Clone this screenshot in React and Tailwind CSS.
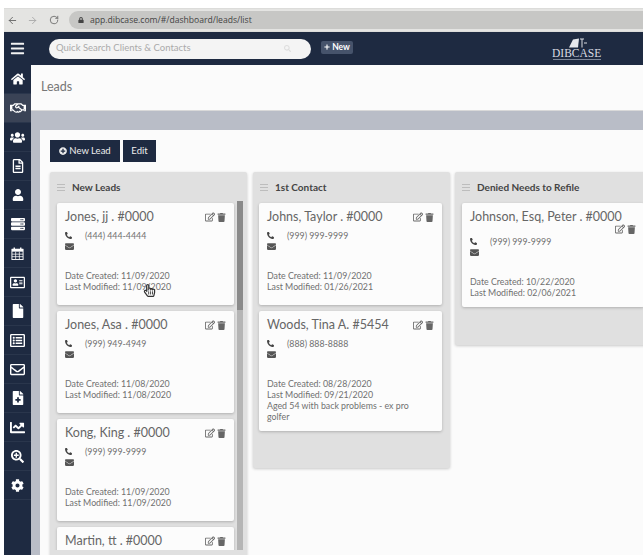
import {
  FaBars,
  FaHome,
  FaRegHandshake,
  FaUsers,
  FaRegFileAlt,
  FaUser,
  FaServer,
  FaRegAddressCard,
  FaFile,
  FaRegListAlt,
  FaRegEnvelope,
  FaEnvelope,
  FaFileMedical,
  FaChartLine,
  FaSearchPlus,
  FaCog,
  FaPlusCircle,
  FaPlus,
  FaPhone,
  FaRegEdit,
  FaTrash,
  FaLock,
  FaSearch,
  FaRegHandPointer,
} from "react-icons/fa";
import { ArrowLeft, ArrowRight, RotateCw } from "lucide-react";

// the old style grid calendar, not in the icon package
const GridCalendar = ({ className }) => (
  <svg viewBox="0 0 14 14" width="13" height="13" className={className} fill="none" stroke="currentColor">
    <rect x="1" y="2.5" width="12" height="11" strokeWidth="1" />
    <rect x="1" y="2" width="12" height="3" fill="currentColor" strokeWidth="0" />
    <path d="M3.5 0.5V3 M10.5 0.5V3" strokeWidth="1.5" />
    <path d="M5 5V13 M9 5V13 M1 7.7H13 M1 10.4H13" strokeWidth="0.8" />
  </svg>
);

const navItems = [
  { Icon: FaHome, size: "text-[14px]" },
  { Icon: FaRegHandshake, size: "text-[16px]", active: true },
  { Icon: FaUsers, size: "text-[15px]" },
  { Icon: FaRegFileAlt, size: "text-[14px]" },
  { Icon: FaUser, size: "text-[12px]" },
  { Icon: FaServer, size: "text-[14px]" },
  { Icon: GridCalendar, size: "" },
  { Icon: FaRegAddressCard, size: "text-[15px]" },
  { Icon: FaFile, size: "text-[14px]" },
  { Icon: FaRegListAlt, size: "text-[15px]" },
  { Icon: FaRegEnvelope, size: "text-[15px]" },
  { Icon: FaFileMedical, size: "text-[14px]" },
  { Icon: FaChartLine, size: "text-[15px]" },
  { Icon: FaSearchPlus, size: "text-[13px]" },
  { Icon: FaCog, size: "text-[13px]" },
];

const Handle = () => (
  <div className="flex w-[8px] flex-col gap-[2px]">
    <div className="h-px bg-[#bdbdbd]" />
    <div className="h-px bg-[#bdbdbd]" />
    <div className="h-px bg-[#bdbdbd]" />
  </div>
);

const LeadCard = ({ name, phone, created, modified, note, wrapIcons }) => (
  <div className={`shrink-0 rounded-[2px] bg-[#fcfcfc] px-[8px] pt-[6px] shadow-[0_1px_3px_rgba(0,0,0,0.22)] ${wrapIcons || note ? "pb-[9px]" : "pb-[13px]"}`}>
    <div className={wrapIcons ? "" : "flex items-start justify-between"}>
      <div className="text-[12.5px] leading-[15px] whitespace-nowrap text-[#666]">{name}</div>
      <div className={`flex h-[10px] items-center gap-[2px] text-[#666] ${wrapIcons ? "justify-end" : "mt-[3px]"}`}>
        <FaRegEdit className="text-[10px]" />
        <FaTrash className="text-[9px]" />
      </div>
    </div>
    <div className={`flex items-center text-[8.8px] leading-[13px] text-[#707070] ${wrapIcons ? "mt-[1px]" : "mt-[5px]"}`}>
      <span className="w-[20px] shrink-0">
        <FaPhone className="-scale-x-100 text-[7px] text-[#444]" />
      </span>
      <span>{phone}</span>
    </div>
    <FaEnvelope className="text-[9px] text-[#555]" />
    <div className="mt-[19px] text-[8.8px] leading-[11px] text-[#707070]">
      <div>Date Created: {created}</div>
      <div>Last Modified: {modified}</div>
      {note && <div className="max-w-[150px]">{note}</div>}
    </div>
  </div>
);

const Column = ({ title, className, children }) => (
  <div className={`shrink-0 rounded-[2px] bg-[#e0e0e0] shadow-[0_1px_3px_rgba(0,0,0,0.2)] ${className}`}>
    <div className="flex h-[31px] items-center gap-[7px] pl-[7px] text-[10px] font-bold text-[#444]">
      <Handle />
      <span>{title}</span>
    </div>
    {children}
  </div>
);

export default function App() {
  return (
    <div className="h-[555px] w-[643px] overflow-hidden bg-white font-['Lato',sans-serif]">
      {/* browser bar */}
      <div className="h-[8px] bg-white" />
      <div className="ml-[4px] flex h-[24px] items-center border-y border-[#dcdcda] bg-[#e4e4e2] text-[#666]">
        <ArrowLeft size={11} className="ml-[3px]" />
        <ArrowRight size={11} className="ml-[9px] text-[#aaa]" />
        <RotateCw size={10} className="ml-[11px]" />
        <div className="ml-[10px] flex h-[18px] flex-1 items-center rounded-l-full bg-[#c7c7c5] pl-[9px] text-[8.6px] text-[#444]">
          <FaLock className="mr-[6px] text-[6px]" />
          <span className="font-['Open_Sans',sans-serif]">app.dibcase.com/#/dashboard/leads/list</span>
        </div>
      </div>

      <div className="flex h-[523px] pl-[4px]">
        {/* sidebar */}
        <div className="flex w-[27px] shrink-0 flex-col bg-[#1e2a41]">
          <div className="flex h-[33px] items-center justify-center text-[#f3f3f3]">
            <FaBars className="text-[15px]" />
          </div>
          {navItems.map(({ Icon, size, active }, index) => (
            <div
              key={index}
              className={`flex h-[29px] items-center justify-center border-b border-[#2a364c] text-white ${active ? "bg-[#3a4356]" : ""}`}
            >
              <Icon className={size} />
            </div>
          ))}
        </div>

        <div className="flex min-w-0 flex-1 flex-col">
          {/* top header */}
          <div className="flex h-[33px] shrink-0 items-center bg-[#1e2a41]">
            <div className="ml-[18px] flex h-[20px] w-[262px] items-center justify-between rounded-full bg-[#f4f4f4] px-[7px] text-[9.5px] text-[#aaa]">
              <span>Quick Search Clients &amp; Contacts</span>
              <FaSearch className="mr-[13px] text-[7px] text-[#ddd]" />
            </div>
            <div className="mb-[3px] ml-[10px] flex h-[13px] w-[32px] items-center justify-center gap-[2px] rounded-[2px] bg-[#46536b] text-[8.5px] font-bold text-white">
              <FaPlus className="text-[6px]" />
              <span>New</span>
            </div>
            <div className="ml-[199px] flex flex-col items-center text-[#d9dce2]">
              <svg width="20" height="10" viewBox="0 0 20 10" className="ml-[2px]">
                <path d="M1 9.5 L5 1.5 L11 .5 L10 9.5 Z" fill="#e6e8ec" />
                <path d="M12 1 H16 M14 1 V9.5 M16 5 H19" stroke="#d9dce2" strokeWidth="1" fill="none" />
              </svg>
              <span className="font-['Liberation_Serif',serif] text-[11.5px] leading-[10px]">DIBCASE</span>
              <div className="mt-[1px] h-px w-[48px] bg-[#7d8698]" />
            </div>
          </div>

          {/* page title */}
          <div className="flex h-[46px] shrink-0 items-center border-b border-[#d9d9d9] bg-[#fbfbfb] pl-[10px] text-[12.5px] text-[#777]">
            Leads
          </div>

          {/* grey band + panel */}
          <div className="min-h-0 flex-1 bg-[#b9bdc7] pt-[19px] pl-[9px]">
            <div className="h-full overflow-hidden bg-[#fbfbfb] pt-[10px] pl-[10px]">
              <div className="flex gap-[3px]">
                <button className="flex h-[22px] w-[70px] items-center justify-center gap-[2px] bg-[#1e2a41] text-[9.5px] text-[#eee]">
                  <FaPlusCircle className="text-[8px]" />
                  New Lead
                </button>
                <button className="h-[22px] w-[33px] bg-[#1e2a41] text-[9.5px] text-[#eee]">Edit</button>
              </div>

              <div className="mt-[10px] flex items-start gap-[5px]">
                <Column title="New Leads" className="h-[390px] w-[197px]">
                  <div className="relative -mt-[2px] h-[349px] overflow-hidden pt-[2px] pl-[7px]">
                    <div className="flex w-[177px] flex-col gap-[6px]">
                      <LeadCard name="Jones, jj . #0000" phone="(444) 444-4444" created="11/09/2020" modified="11/09/2020" />
                      <LeadCard name="Jones, Asa . #0000" phone="(999) 949-4949" created="11/08/2020" modified="11/08/2020" />
                      <LeadCard name="Kong, King . #0000" phone="(999) 999-9999" created="11/09/2020" modified="11/09/2020" />
                      <LeadCard name="Martin, tt . #0000" phone="(999) 999-9999" created="11/09/2020" modified="11/09/2020" />
                    </div>
                    {/* scrollbar */}
                    <div className="absolute top-0 left-[187px] h-full w-[6px] bg-[#b5b5b5]">
                      <div className="h-[109px] bg-[#8a8a8a]" />
                    </div>
                    <FaRegHandPointer className="absolute top-[83px] left-[93px] text-[13px] text-[#333]" />
                  </div>
                </Column>

                <Column title="1st Contact" className="ml-px h-[296px] w-[197px]">
                  <div className="flex w-[189px] flex-col gap-[6px] pl-[6px]">
                    <LeadCard name="Johns, Taylor . #0000" phone="(999) 999-9999" created="11/09/2020" modified="01/26/2021" />
                    <LeadCard
                      name="Woods, Tina A. #5454"
                      phone="(888) 888-8888"
                      created="08/28/2020"
                      modified="09/21/2020"
                      note="Aged 54 with back problems - ex pro golfer"
                    />
                  </div>
                </Column>

                <Column title="Denied Needs to Refile" className="h-[173px] w-[197px]">
                  <div className="w-[189px] pl-[7px]">
                    <LeadCard
                      wrapIcons
                      name="Johnson, Esq, Peter . #0000"
                      phone="(999) 999-9999"
                      created="10/22/2020"
                      modified="02/06/2021"
                    />
                  </div>
                </Column>
              </div>
            </div>
          </div>
        </div>
      </div>
    </div>
  );
}
